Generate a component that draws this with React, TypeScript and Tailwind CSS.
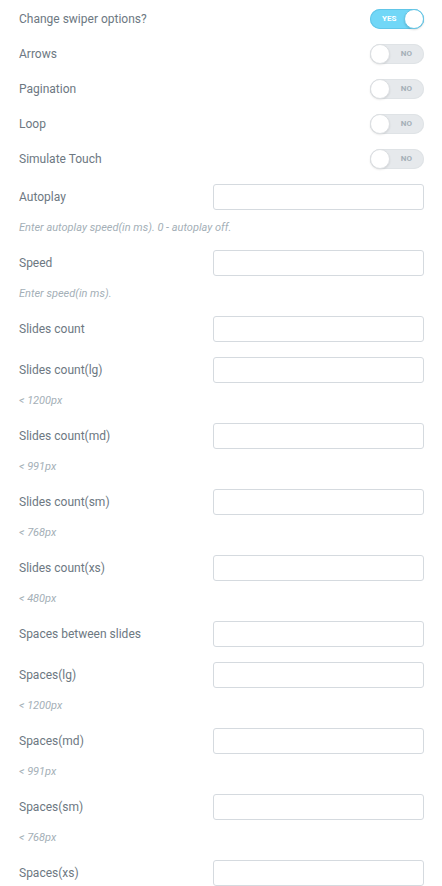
import React from 'react';

const toggles = [
  { label: 'Change swiper options?', on: true },
  { label: 'Arrows', on: false },
  { label: 'Pagination', on: false },
  { label: 'Loop', on: false },
  { label: 'Simulate Touch', on: false },
];

const inputs: { label: string; desc?: string }[] = [
  { label: 'Autoplay', desc: 'Enter autoplay speed(in ms). 0 - autoplay off.' },
  { label: 'Speed', desc: 'Enter speed(in ms).' },
  { label: 'Slides count' },
  { label: 'Slides count(lg)', desc: '< 1200px' },
  { label: 'Slides count(md)', desc: '< 991px' },
  { label: 'Slides count(sm)', desc: '< 768px' },
  { label: 'Slides count(xs)', desc: '< 480px' },
  { label: 'Spaces between slides' },
  { label: 'Spaces(lg)', desc: '< 1200px' },
  { label: 'Spaces(md)', desc: '< 991px' },
  { label: 'Spaces(sm)', desc: '< 768px' },
  { label: 'Spaces(xs)' },
];

const Switcher = ({ on }: { on: boolean }) => (
  <div
    className={`relative w-[54px] h-[20px] rounded-full flex items-center ${
      on ? 'bg-[#71d7f7] shadow-[inset_0_0_0_1px_#61c6e8]' : 'bg-[#e6e9ec] shadow-[inset_0_0_0_1px_#dfe3e6]'
    }`}
  >
    {on ? (
      <>
        <span className="pl-[12px] text-[8px] font-bold text-white leading-none">YES</span>
        <span className="absolute right-0 top-0 w-[20px] h-[20px] rounded-full bg-white border border-[#64c6e6] shadow-[0_1px_2px_rgba(0,0,0,0.15)]" />
      </>
    ) : (
      <>
        <span className="absolute left-0 top-0 w-[20px] h-[20px] rounded-full bg-white border border-[#dcdfe2] shadow-[0_1px_2px_rgba(0,0,0,0.1)]" />
        <span className="ml-auto pr-[12px] text-[8px] font-bold text-[#a4afb7] leading-none">NO</span>
      </>
    )}
  </div>
);

export default function App() {
  return (
    <div className="w-[442px] bg-white pt-[9px] pl-[19px] pr-[18px] flex flex-col gap-[15px] font-['Roboto',sans-serif] text-[12px] text-[#6d7882]">
      {toggles.map(t => (
        <div key={t.label} className="flex items-center justify-between h-[20px]">
          <span>{t.label}</span>
          <Switcher on={t.on} />
        </div>
      ))}
      {inputs.map(i => (
        <div key={i.label} className="flex flex-col">
          <div className="flex items-center justify-between h-[26px]">
            <span>{i.label}</span>
            <input
              type="text"
              className="w-[211px] h-[26px] border border-[#d5dadf] rounded-[3px] bg-white outline-none"
            />
          </div>
          {i.desc && (
            <div className="mt-[10px] h-[15px] leading-[15px] text-[11px] italic text-[#a4afb7]">{i.desc}</div>
          )}
        </div>
      ))}
    </div>
  );
}
